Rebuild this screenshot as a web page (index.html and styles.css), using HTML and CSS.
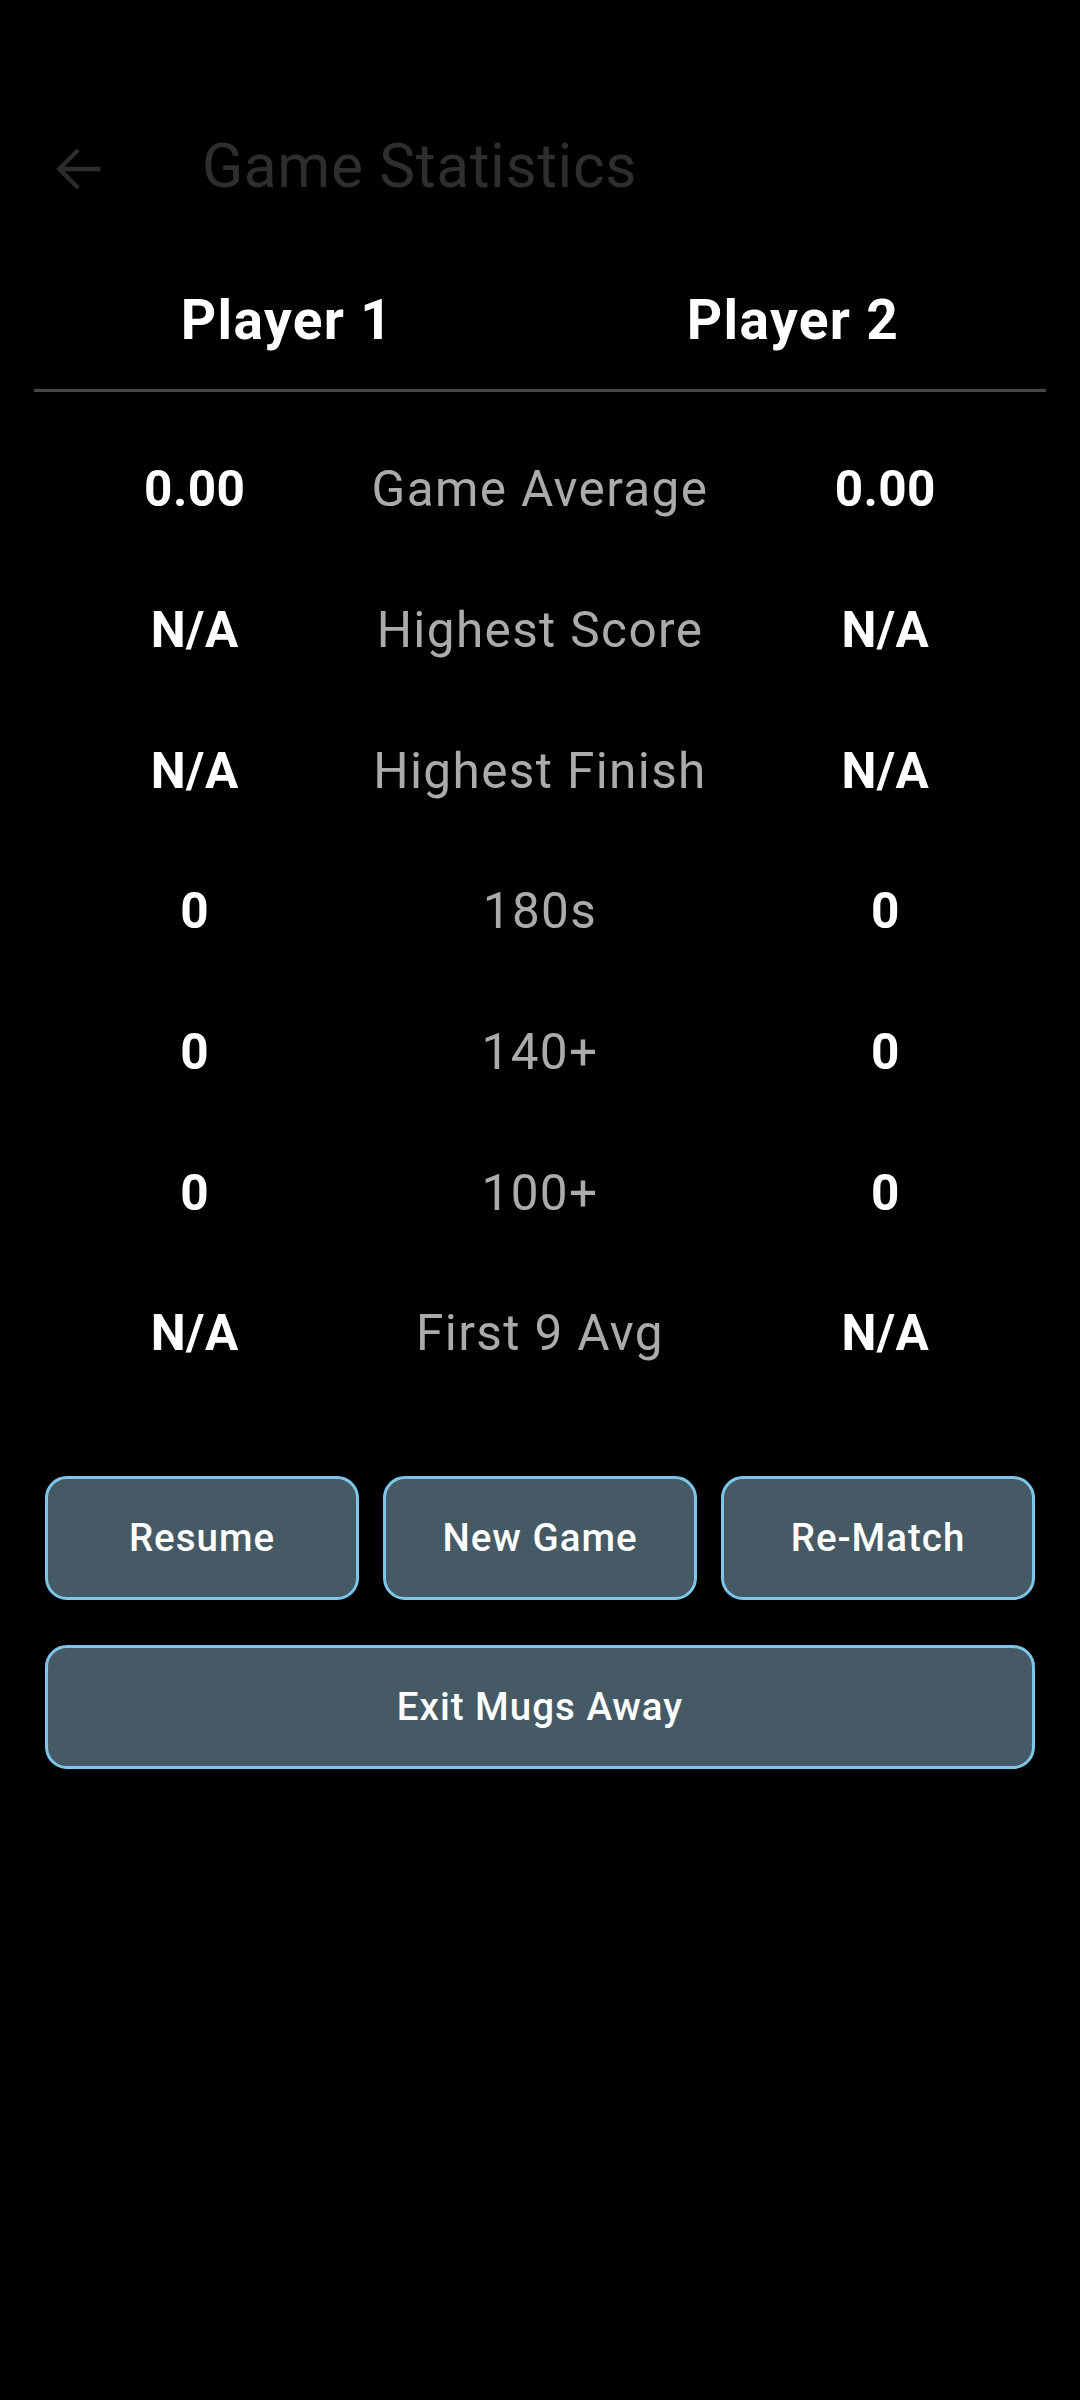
FILE: index.html
```html
<!DOCTYPE html>
<html lang="en">
<head>
<meta charset="utf-8">
<title>Game Statistics</title>
<link rel="stylesheet" href="styles.css">
</head>
<body>
<div class="screen">
  <header class="appbar">
    <div class="back">
      <svg viewBox="0 0 24 24" width="66" height="66" aria-hidden="true">
        <path d="M19.8 12H4.8M11.7 5.1 4.8 12l6.9 6.9" fill="none" stroke="#2c2c2f" stroke-width="1.6"/>
      </svg>
    </div>
    <h1 class="title">Game Statistics</h1>
  </header>

  <div class="players">
    <div class="player">Player 1</div>
    <div class="player">Player 2</div>
  </div>
  <div class="divider"></div>

  <div class="stats">
    <div class="row"><span class="val">0.00</span><span class="label">Game Average</span><span class="val">0.00</span></div>
    <div class="row"><span class="val">N/A</span><span class="label">Highest Score</span><span class="val">N/A</span></div>
    <div class="row"><span class="val">N/A</span><span class="label">Highest Finish</span><span class="val">N/A</span></div>
    <div class="row"><span class="val">0</span><span class="label">180s</span><span class="val">0</span></div>
    <div class="row"><span class="val">0</span><span class="label">140+</span><span class="val">0</span></div>
    <div class="row"><span class="val">0</span><span class="label">100+</span><span class="val">0</span></div>
    <div class="row"><span class="val">N/A</span><span class="label">First 9 Avg</span><span class="val">N/A</span></div>
  </div>

  <div class="actions">
    <div class="btn-row">
      <button class="btn">Resume</button>
      <button class="btn">New Game</button>
      <button class="btn">Re-Match</button>
    </div>
    <button class="btn btn-wide">Exit Mugs Away</button>
  </div>
</div>
</body>
</html>
```

FILE: styles.css
```css
html, body {
  margin: 0;
  padding: 0;
  background: #000;
}

body {
  font-family: Roboto, "Noto Sans", sans-serif;
  color: #fff;
  width: 1080px;
  min-height: 2400px;
}

.screen {
  display: flex;
  flex-direction: column;
  padding-top: 92px;
}

.appbar {
  height: 154px;
  display: flex;
  align-items: center;
  padding-left: 46px;
}

.back {
  width: 66px;
  height: 66px;
  display: flex;
}

.title {
  margin: 0 0 0 90px;
  font-size: 60.5px;
  font-weight: 400;
  letter-spacing: 0.6px;
  color: #2e2e31;
  line-height: 1;
  position: relative;
  top: -2px;
}

.players {
  display: grid;
  grid-template-columns: 1fr 1fr;
  margin: 42px 34px 0;
}

.player {
  text-align: center;
  font-size: 55px;
  font-weight: 700;
  letter-spacing: 1.375px;
  line-height: 64px;
}

.divider {
  margin: 37px 34px 0;
  height: 3px;
  background: #464646;
}

.stats {
  display: flex;
  flex-direction: column;
  padding: 27px 22px 0;
}

.row {
  display: grid;
  grid-template-columns: 1fr 1fr 1fr;
  align-items: center;
  height: 140.7px;
  font-size: 49.5px;
  line-height: 58px;
}

.row span {
  text-align: center;
  white-space: nowrap;
}

.val {
  font-weight: 700;
  color: #fff;
  letter-spacing: 0.4px;
}

.label {
  font-weight: 400;
  color: #ababab;
  letter-spacing: 1.375px;
}

.actions {
  display: flex;
  flex-direction: column;
  gap: 45px;
  padding: 72px 45px 0;
}

.btn-row {
  display: grid;
  grid-template-columns: 1fr 1fr 1fr;
  gap: 24px;
}

.btn {
  height: 124px;
  background: #455a64;
  border: 3px solid #7cc6ea;
  border-radius: 22px;
  color: #fff;
  font-family: Roboto, "Noto Sans", sans-serif;
  font-size: 38.5px;
  font-weight: 500;
  letter-spacing: 1px;
  padding: 0;
  box-sizing: border-box;
}

.btn-wide {
  width: 100%;
}
```
